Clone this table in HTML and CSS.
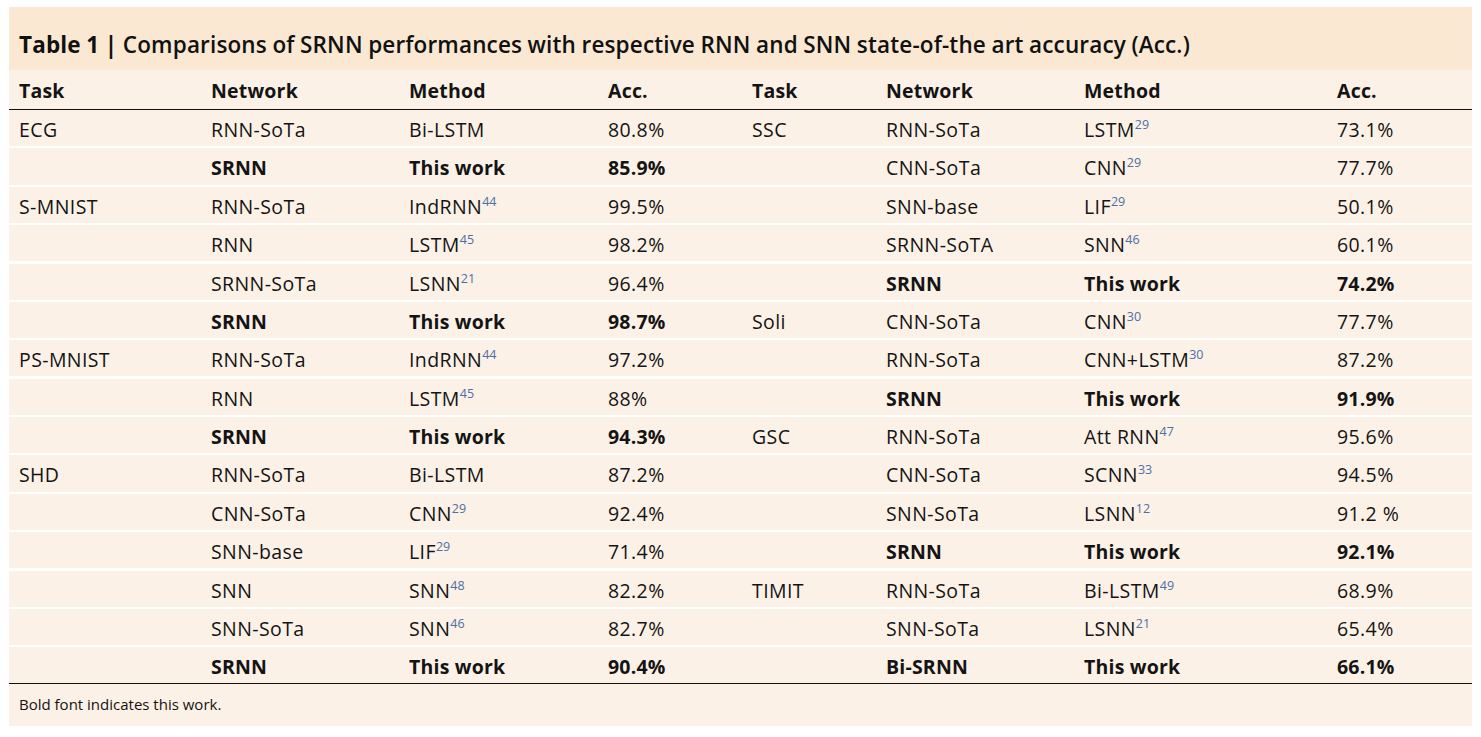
FILE: index.html
```html
<!DOCTYPE html>
<html>
<head>
<meta charset="utf-8">
<link rel="stylesheet" href="styles.css">
</head>
<body>
<div class="box">
  <div class="title"><b>Table 1 |</b> Comparisons of SRNN performances with respective RNN and SNN state-of-the art accuracy (Acc.)</div>
  <div class="row head">
    <div>Task</div><div>Network</div><div>Method</div><div>Acc.</div><div>Task</div><div>Network</div><div>Method</div><div>Acc.</div>
  </div>
  <div class="body">
    <div class="row"><div>ECG</div><div>RNN-SoTa</div><div>Bi-LSTM</div><div>80.8%</div><div>SSC</div><div>RNN-SoTa</div><div>LSTM<sup>29</sup></div><div>73.1%</div></div>
    <div class="row"><div></div><div class="b">SRNN</div><div class="b">This work</div><div class="b">85.9%</div><div></div><div>CNN-SoTa</div><div>CNN<sup>29</sup></div><div>77.7%</div></div>
    <div class="row"><div>S-MNIST</div><div>RNN-SoTa</div><div>IndRNN<sup>44</sup></div><div>99.5%</div><div></div><div>SNN-base</div><div>LIF<sup>29</sup></div><div>50.1%</div></div>
    <div class="row"><div></div><div>RNN</div><div>LSTM<sup>45</sup></div><div>98.2%</div><div></div><div>SRNN-SoTA</div><div>SNN<sup>46</sup></div><div>60.1%</div></div>
    <div class="row"><div></div><div>SRNN-SoTa</div><div>LSNN<sup>21</sup></div><div>96.4%</div><div></div><div class="b">SRNN</div><div class="b">This work</div><div class="b">74.2%</div></div>
    <div class="row"><div></div><div class="b">SRNN</div><div class="b">This work</div><div class="b">98.7%</div><div>Soli</div><div>CNN-SoTa</div><div>CNN<sup>30</sup></div><div>77.7%</div></div>
    <div class="row"><div>PS-MNIST</div><div>RNN-SoTa</div><div>IndRNN<sup>44</sup></div><div>97.2%</div><div></div><div>RNN-SoTa</div><div>CNN+LSTM<sup>30</sup></div><div>87.2%</div></div>
    <div class="row"><div></div><div>RNN</div><div>LSTM<sup>45</sup></div><div>88%</div><div></div><div class="b">SRNN</div><div class="b">This work</div><div class="b">91.9%</div></div>
    <div class="row"><div></div><div class="b">SRNN</div><div class="b">This work</div><div class="b">94.3%</div><div>GSC</div><div>RNN-SoTa</div><div>Att RNN<sup>47</sup></div><div>95.6%</div></div>
    <div class="row"><div>SHD</div><div>RNN-SoTa</div><div>Bi-LSTM</div><div>87.2%</div><div></div><div>CNN-SoTa</div><div>SCNN<sup>33</sup></div><div>94.5%</div></div>
    <div class="row"><div></div><div>CNN-SoTa</div><div>CNN<sup>29</sup></div><div>92.4%</div><div></div><div>SNN-SoTa</div><div>LSNN<sup>12</sup></div><div>91.2 %</div></div>
    <div class="row"><div></div><div>SNN-base</div><div>LIF<sup>29</sup></div><div>71.4%</div><div></div><div class="b">SRNN</div><div class="b">This work</div><div class="b">92.1%</div></div>
    <div class="row"><div></div><div>SNN</div><div>SNN<sup>48</sup></div><div>82.2%</div><div>TIMIT</div><div>RNN-SoTa</div><div>Bi-LSTM<sup>49</sup></div><div>68.9%</div></div>
    <div class="row"><div></div><div>SNN-SoTa</div><div>SNN<sup>46</sup></div><div>82.7%</div><div></div><div>SNN-SoTa</div><div>LSNN<sup>21</sup></div><div>65.4%</div></div>
    <div class="row"><div></div><div class="b">SRNN</div><div class="b">This work</div><div class="b">90.4%</div><div></div><div class="b">Bi-SRNN</div><div class="b">This work</div><div class="b">66.1%</div></div>
  </div>
  <div class="foot">Bold font indicates this work.</div>
</div>
</body>
</html>
```
FILE: styles.css
```css
html, body {
  margin: 0;
  padding: 0;
  background: #ffffff;
}
body {
  font-family: "Open Sans", "Noto Sans", sans-serif;
  color: #141414;
}
.box {
  width: 1463px;
  margin: 7px 0 0 9px;
}
.title {
  background: #fae8d3;
  height: 63px;
  box-sizing: border-box;
  padding: 23px 0 0 10px;
  font-size: 22.5px;
  font-weight: 600;
  line-height: 30px;
  color: #111;
  letter-spacing: 0.15px;
  word-spacing: -0.5px;
}
.title b {
  font-weight: 700;
}
.row {
  display: grid;
  grid-template-columns: 192px 198px 199px 144px 134px 198px 253px 145px;
  align-items: center;
  background: #fcf1e6;
  height: 36.2px;
  box-sizing: border-box;
  padding-top: 3px;
  font-size: 19.5px;
  letter-spacing: 0.4px;
}
.row > div {
  padding-left: 10px;
  white-space: nowrap;
}
.row.head {
  height: 40px;
  border-bottom: 1.5px solid #111;
  font-weight: 700;
  padding-top: 2px;
  letter-spacing: 0.2px;
}
.body {
  display: flex;
  flex-direction: column;
  gap: 2.2px;
  border-bottom: 1.5px solid #111;
}
.b {
  font-weight: 700;
  letter-spacing: 0.2px;
}
sup {
  font-size: 12.5px;
  color: #4b6fa6;
  vertical-align: 0;
  position: relative;
  top: -8px;
  letter-spacing: 0;
}
.foot {
  background: #fcf1e6;
  height: 42px;
  box-sizing: border-box;
  padding: 10px 0 0 10px;
  font-size: 15px;
  line-height: 20px;
}
```
